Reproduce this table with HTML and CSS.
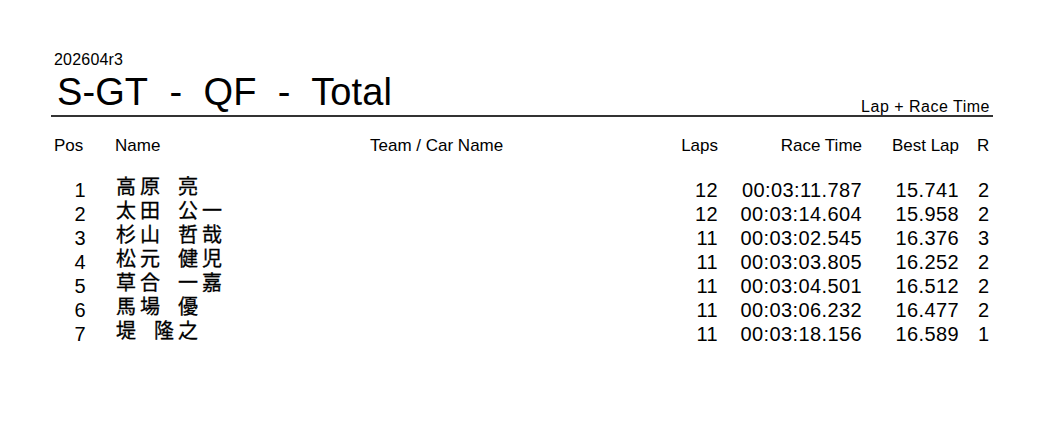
FILE: index.html
```html
<!DOCTYPE html>
<html>
<head>
<meta charset="utf-8">
<link rel="stylesheet" href="styles.css">
</head>
<body>
<div class="page">
  <div class="event">202604r3</div>
  <div class="titlebar">
    <h1 class="title">S-GT&nbsp; -&nbsp; QF&nbsp; -&nbsp; Total</h1>
    <div class="mode">Lap + Race Time</div>
  </div>
  <div class="grid head">
    <div class="c-pos">Pos</div>
    <div class="c-name">Name</div>
    <div class="c-team">Team / Car Name</div>
    <div class="c-laps">Laps</div>
    <div class="c-time">Race Time</div>
    <div class="c-best">Best Lap</div>
    <div class="c-r">R</div>
  </div>
  <div class="rows">
    <div class="grid row"><div class="c-pos num">1</div><div class="c-name jp">高原<span class="gap"></span>亮</div><div class="c-team"></div><div class="c-laps">12</div><div class="c-time">00:03:11.787</div><div class="c-best">15.741</div><div class="c-r">2</div></div>
    <div class="grid row"><div class="c-pos num">2</div><div class="c-name jp">太田<span class="gap"></span>公一</div><div class="c-team"></div><div class="c-laps">12</div><div class="c-time">00:03:14.604</div><div class="c-best">15.958</div><div class="c-r">2</div></div>
    <div class="grid row"><div class="c-pos num">3</div><div class="c-name jp">杉山<span class="gap"></span>哲哉</div><div class="c-team"></div><div class="c-laps">11</div><div class="c-time">00:03:02.545</div><div class="c-best">16.376</div><div class="c-r">3</div></div>
    <div class="grid row"><div class="c-pos num">4</div><div class="c-name jp">松元<span class="gap"></span>健児</div><div class="c-team"></div><div class="c-laps">11</div><div class="c-time">00:03:03.805</div><div class="c-best">16.252</div><div class="c-r">2</div></div>
    <div class="grid row"><div class="c-pos num">5</div><div class="c-name jp">草合<span class="gap"></span>一嘉</div><div class="c-team"></div><div class="c-laps">11</div><div class="c-time">00:03:04.501</div><div class="c-best">16.512</div><div class="c-r">2</div></div>
    <div class="grid row"><div class="c-pos num">6</div><div class="c-name jp">馬場<span class="gap"></span>優</div><div class="c-team"></div><div class="c-laps">11</div><div class="c-time">00:03:06.232</div><div class="c-best">16.477</div><div class="c-r">2</div></div>
    <div class="grid row"><div class="c-pos num">7</div><div class="c-name jp">堤<span class="gap"></span>隆之</div><div class="c-team"></div><div class="c-laps">11</div><div class="c-time">00:03:18.156</div><div class="c-best">16.589</div><div class="c-r">1</div></div>
  </div>
</div>
</body>
</html>
```

FILE: styles.css
```css
html, body {
  margin: 0;
  padding: 0;
  background: #ffffff;
}
body {
  font-family: "Liberation Sans", Arial, sans-serif;
  color: #000;
}
.page {
  width: 942px;
  margin-left: 51px;
  padding-top: 51px;
}
.event {
  font-size: 16px;
  line-height: 18px;
  margin-left: 3px;
  letter-spacing: 0.2px;
}
.titlebar {
  display: flex;
  justify-content: space-between;
  align-items: flex-end;
  border-bottom: 2px solid #333;
  margin-top: 3px;
}
.title {
  margin: 0 0 3px 6px;
  font-weight: normal;
  font-size: 38px;
  line-height: 40px;
  letter-spacing: 0.1px;
  white-space: nowrap;
}
.mode {
  font-size: 16px;
  line-height: 16px;
  letter-spacing: 0.5px;
  margin-right: 3px;
}
.grid {
  display: grid;
  grid-template-columns: 64px 255px 300px 48px 144px 97px 34px;
  white-space: nowrap;
}
.head {
  font-size: 17px;
  line-height: 20px;
  margin-top: 19px;
}
.head .c-pos { padding-left: 3px; }
.head .c-r { padding-left: 18px; }
.rows {
  margin-top: 22px;
}
.row {
  font-size: 20px;
  line-height: 24px;
  letter-spacing: 0.4px;
}
.c-laps, .c-time, .c-best { text-align: right; }
.c-pos.num { text-align: right; padding-right: 29px; }
.row .c-r { padding-left: 19px; }
.jp {
  font-family: "Noto Sans CJK JP", sans-serif;
  font-size: 20px;
  line-height: 16px;
  letter-spacing: 4px;
  margin-left: 1px;
  -webkit-text-stroke: 0.3px #000;
}
.gap {
  display: inline-block;
  width: 14px;
}
```
